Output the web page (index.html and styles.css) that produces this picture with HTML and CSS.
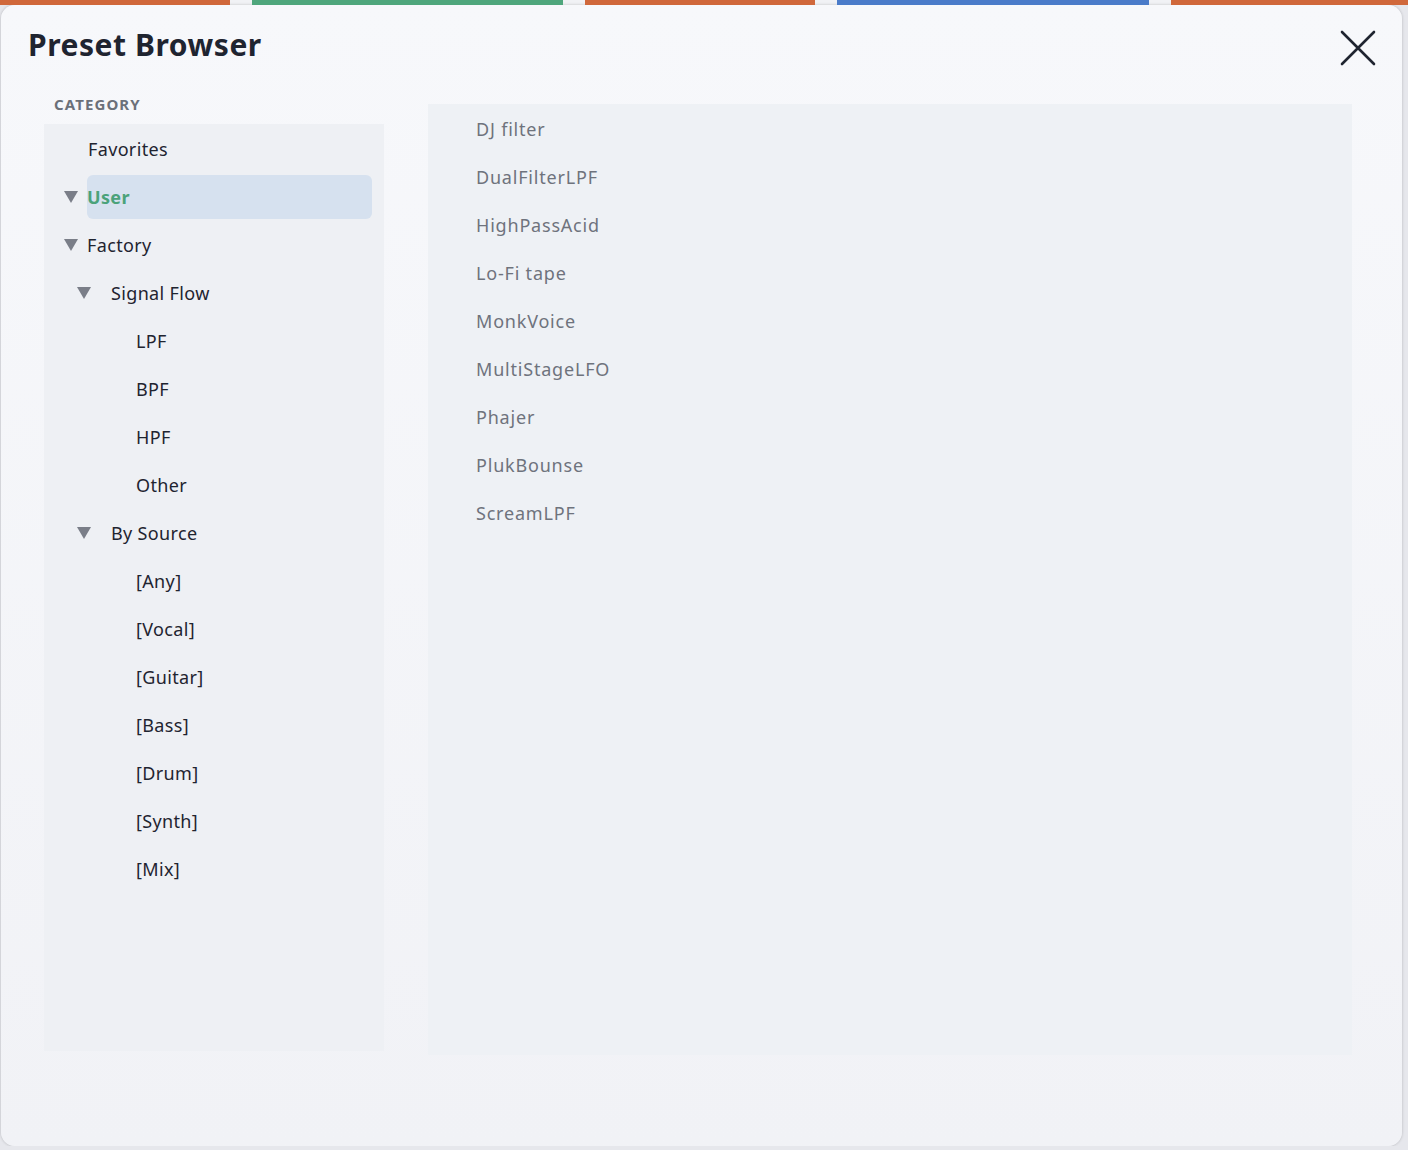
FILE: index.html
```html
<!DOCTYPE html>
<html lang="en">
  <head>
    <meta charset="UTF-8" />
    <meta name="viewport" content="width=device-width, initial-scale=1.0" />
    <title>Preset Browser</title>
    <link rel="stylesheet" href="styles.css">
  </head>
  <body>
    <div class="tabs">
      <div class="tab orange t1"></div>
      <div class="tab green t2"></div>
      <div class="tab orange t3"></div>
      <div class="tab blue t4"></div>
      <div class="tab orange t5"></div>
    </div>
    <div class="modal">
      <div class="modal_head">
        <h1 class="title">Preset Browser</h1>
        <button class="close" aria-label="Close">
          <svg width="36" height="36" viewBox="0 0 36 36">
            <path d="M2 2 L34 34 M34 2 L2 34" stroke="#1f2430" stroke-width="2.6" stroke-linecap="round" fill="none" />
          </svg>
        </button>
      </div>
      <div class="modal_body">
        <div class="category_col">
          <div class="category_label">CATEGORY</div>
          <div class="tree">
            <div class="row lv0"><span class="label">Favorites</span></div>
            <div class="row lv0 has_caret"><span class="caret"></span><span class="label selected">User</span></div>
            <div class="row lv0 has_caret"><span class="caret"></span><span class="label">Factory</span></div>
            <div class="row lv1 has_caret"><span class="caret"></span><span class="label">Signal Flow</span></div>
            <div class="row lv2"><span class="label">LPF</span></div>
            <div class="row lv2"><span class="label">BPF</span></div>
            <div class="row lv2"><span class="label">HPF</span></div>
            <div class="row lv2"><span class="label">Other</span></div>
            <div class="row lv1 has_caret"><span class="caret"></span><span class="label">By Source</span></div>
            <div class="row lv2"><span class="label">[Any]</span></div>
            <div class="row lv2"><span class="label">[Vocal]</span></div>
            <div class="row lv2"><span class="label">[Guitar]</span></div>
            <div class="row lv2"><span class="label">[Bass]</span></div>
            <div class="row lv2"><span class="label">[Drum]</span></div>
            <div class="row lv2"><span class="label">[Synth]</span></div>
            <div class="row lv2"><span class="label">[Mix]</span></div>
          </div>
        </div>
        <div class="preset_list">
          <div class="preset">DJ filter</div>
          <div class="preset">DualFilterLPF</div>
          <div class="preset">HighPassAcid</div>
          <div class="preset">Lo-Fi tape</div>
          <div class="preset">MonkVoice</div>
          <div class="preset">MultiStageLFO</div>
          <div class="preset">Phajer</div>
          <div class="preset">PlukBounse</div>
          <div class="preset">ScreamLPF</div>
        </div>
      </div>
    </div>
  </body>
</html>
```

FILE: styles.css
```css
* {
  margin: 0;
  padding: 0;
  box-sizing: border-box;
}
body {
  background: #e6e7ec;
  font-family: "Noto Sans", "Open Sans", sans-serif;
  overflow: hidden;
}

/* 상단 컬러 탭 */
.tabs {
  display: flex;
  gap: 22px;
  height: 5px;
  background: #f1f2f5;
}
.tab {
  height: 5px;
}
.t1 { width: 230px; }
.t2 { width: 311px; }
.t3 { width: 230px; }
.t4 { width: 312px; }
.t5 { flex: 1; }
.orange { background: #d0683b; }
.green { background: #4fa67c; }
.blue { background: #4a7bc9; }

/* 모달 */
.modal {
  margin: 0 6px 0 1px;
  height: 1141px;
  border-radius: 14px;
  background: linear-gradient(#f7f8fb, #f1f2f6);
  box-shadow: 0 0 3px rgba(0, 0, 0, 0.22);
}
.modal_head {
  display: flex;
  justify-content: space-between;
  align-items: flex-start;
  padding: 20px 26px 0 27px;
}
.title {
  font-size: 30px;
  line-height: 40px;
  font-weight: 700;
  color: #1f2430;
  letter-spacing: 0.55px;
}
.close {
  border: none;
  background: none;
  margin-top: 5px;
  width: 36px;
  height: 36px;
}

.modal_body {
  display: grid;
  grid-template-columns: 340px 924px;
  column-gap: 44px;
  padding-left: 43px;
  margin-top: 28px;
}
.category_label {
  font-size: 15px;
  line-height: 20px;
  font-weight: 700;
  color: #6b7079;
  letter-spacing: 1.1px;
  padding-left: 10px;
  margin-bottom: 10px;
}
.tree {
  height: 927px;
  background: #eef0f4;
  padding-top: 1px;
}
.row {
  display: flex;
  align-items: center;
  height: 48px;
  font-size: 18px;
  letter-spacing: 0.35px;
  color: #1f2430;
}
.lv0 { padding-left: 44px; }
.lv0.has_caret { padding-left: 20px; }
.lv1.has_caret { padding-left: 33px; }
.lv2 { padding-left: 92px; }

.caret {
  width: 0;
  height: 0;
  border-left: 7.5px solid transparent;
  border-right: 7.5px solid transparent;
  border-top: 12px solid #7a7e88;
  margin-right: 9px;
}
.lv1 .caret {
  margin-right: 20px;
}
.label {
  flex: 1;
  display: flex;
  align-items: center;
  height: 44px;
  margin-right: 12px;
  border-radius: 6px;
}
.label.selected {
  background: #d6e1ef;
  color: #4ba27a;
  font-weight: 700;
}

.preset_list {
  margin-top: 10px;
  height: 951px;
  background: #eef1f5;
  padding: 1px 0 0 48px;
}
.preset {
  height: 48px;
  line-height: 48px;
  font-size: 18px;
  letter-spacing: 0.8px;
  color: #6e737d;
}
```
